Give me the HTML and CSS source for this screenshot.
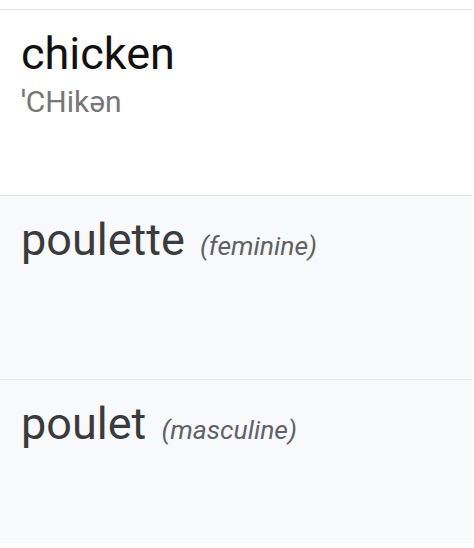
FILE: index.html
```html
<!DOCTYPE html>
<html lang="en">
<head>
    <meta charset="UTF-8">
    <meta name="viewport" content="width=device-width, initial-scale=1.0">
    <title>chicken - translation</title>
    <link rel="stylesheet" href="styles.css">
</head>
<body>

    <!-- Translation card -->
    <div class="translation-list">
        <section class="entry entry-source">
            <div class="word">chicken</div>
            <div class="phonetic">ˈCHikən</div>
        </section>
        <section class="entry entry-target">
            <div class="word target-word">poulette <span class="gender">(feminine)</span></div>
        </section>
        <section class="entry entry-target entry-last">
            <div class="word target-word">poulet <span class="gender">(masculine)</span></div>
        </section>
    </div>

</body>
</html>
```

FILE: styles.css
```css
/* Global Styles */
body {
    font-family: Roboto, "Noto Sans", Arial, sans-serif;
    background-color: #fff;
    margin: 0;
    padding: 0;
}

/* List */
.translation-list {
    margin-top: 9px;
    margin-right: 2px;
}

.entry {
    border-top: 1px solid #e6e7e9;
    padding: 18px 21px 0;
    box-sizing: border-box;
}

.entry-source {
    height: 186px;
    background-color: #fff;
}

.entry-target {
    height: 184px;
    background-color: #f8f9fa;
}

.entry-last {
    height: 164px;
}

/* Text */
.word {
    font-size: 45px;
    line-height: 52px;
    color: #111;
}

.target-word {
    color: #3a3b3e;
}

.phonetic {
    font-size: 30px;
    color: #767676;
}

.gender {
    margin-left: 4px;
    font-size: 26.5px;
    font-style: italic;
    color: #5f6166;
}
```
